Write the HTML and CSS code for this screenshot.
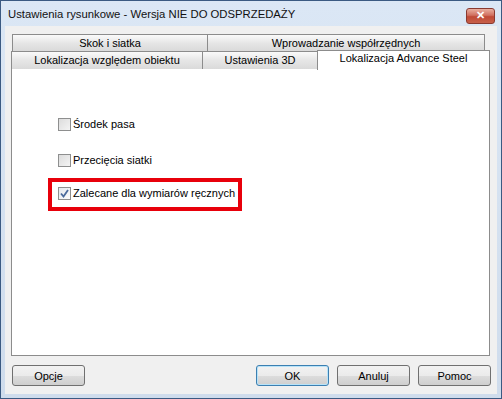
FILE: index.html
```html
<!DOCTYPE html>
<html lang="pl">
<head>
    <meta charset="UTF-8">
    <title>Ustawienia rysunkowe</title>
    <link rel="stylesheet" href="styles.css">
</head>
<body>
    <div class="window">
        <div class="titlebar">
            <span class="title">Ustawienia rysunkowe - Wersja NIE DO ODSPRZEDAŻY</span>
            <span class="close">&#x2715;</span>
        </div>
        <div class="client">
            <div class="tabs">
                <div class="tab-row back">
                    <div class="tab w195">Skok i siatka</div>
                    <div class="tab w277">Wprowadzanie współrzędnych</div>
                </div>
                <div class="tab-row front">
                    <div class="tab w191">Lokalizacja względem obiektu</div>
                    <div class="tab w115">Ustawienia 3D</div>
                    <div class="tab active">Lokalizacja Advance Steel</div>
                </div>
            </div>
            <div class="panel">
                <label class="check first"><span class="box"></span>Środek pasa</label>
                <label class="check second"><span class="box"></span>Przecięcia siatki</label>
                <div class="highlight">
                    <label class="check"><span class="box checked">
                        <svg width="11" height="11" viewBox="0 0 11 11"><path d="M2 5.5 L4.5 8.5 L9 2" fill="none" stroke="#4a6a9c" stroke-width="1.8"/></svg>
                    </span>Zalecane dla wymiarów ręcznych</label>
                </div>
            </div>
            <div class="buttons">
                <button>Opcje</button>
                <div class="spacer"></div>
                <button class="default">OK</button>
                <button>Anuluj</button>
                <button>Pomoc</button>
            </div>
        </div>
    </div>
</body>
</html>
```
FILE: styles.css
```css
body {
    margin: 0;
    font-family: "Liberation Sans", Arial, sans-serif;
    font-size: 11px;
    color: #000;
}

.window {
    width: 502px;
    height: 399px;
    box-sizing: border-box;
    border: 1px solid #3b5a82;
    background: linear-gradient(#dbe7f5, #cfdcec);
    display: flex;
    flex-direction: column;
    padding: 0 4px 4px 4px;
}

.titlebar {
    height: 25px;
    display: flex;
    align-items: center;
    justify-content: space-between;
    flex-shrink: 0;
}
.title {
    font-size: 11.3px;
    padding-left: 3px;
    margin-top: 1px;
    color: #111;
}
.close {
    width: 29px;
    height: 16px;
    margin-right: 2px;
    margin-top: 4px;
    border: 1px solid #8a3a30;
    border-radius: 3px;
    background: linear-gradient(#eab0a0, #d07060 45%, #c04a36 55%, #c8604a);
    color: #fff;
    font-size: 11px;
    font-weight: bold;
    display: flex;
    align-items: center;
    justify-content: center;
    box-sizing: border-box;
}

.client {
    flex: 1;
    background: #f0f0f0;
    padding: 8px 6px 0 6px;
    display: flex;
    flex-direction: column;
}

.tabs {
    display: flex;
    flex-direction: column;
}
.tab-row {
    display: flex;
}
.tab-row.back {
    padding-left: 1px;
    height: 17px;
}
.tab-row.front {
    height: 19px;
    margin-top: -1px;
    position: relative;
    z-index: 1;
}
.tab {
    box-sizing: border-box;
    border: 1px solid #8c8c8c;
    border-bottom: none;
    background: linear-gradient(#fafafa, #e6e6e6 50%, #dadada);
    text-align: center;
    line-height: 16px;
    margin-right: -1px;
    white-space: nowrap;
}
.tab-row.front .tab {
    margin-top: 1px;
    line-height: 17px;
}
.w195 { width: 196px; }
.w277 { width: 278px; }
.w191 { width: 192px; }
.w115 { width: 116px; }
.tab-row.front .tab.active {
    width: 173px;
    margin-top: 0;
    height: 20px;
    background: #fff;
    line-height: 15px;
}

.panel {
    height: 288px;
    box-sizing: border-box;
    border: 1px solid #8c8c8c;
    background: #fff;
    margin-top: -1px;
    width: 479px;
    padding: 48px 0 0 36px;
}

.check {
    display: flex;
    align-items: center;
    height: 14px;
    white-space: nowrap;
}
.check.first {
    padding-left: 10px;
}
.check.second {
    padding-left: 10px;
    margin-top: 22px;
}
.box {
    width: 13px;
    height: 13px;
    flex-shrink: 0;
    box-sizing: border-box;
    border: 1px solid #8e8f8f;
    background: linear-gradient(135deg, #dcdcdc, #f4f4f4);
    margin-right: 2px;
    display: flex;
    align-items: center;
    justify-content: center;
}
.box.checked {
    background: linear-gradient(135deg, #e4e8ee, #fbfbfb);
}

.highlight {
    width: 194px;
    height: 33px;
    box-sizing: border-box;
    border: 4px solid #e8000b;
    margin-top: 11px;
    padding: 4px 6px;
}

.buttons {
    display: flex;
    padding: 9px 0 0 1px;
    width: 479px;
}
.spacer {
    flex: 1;
}
button {
    width: 73px;
    height: 21px;
    margin-left: 8px;
    font-family: "Liberation Sans", Arial, sans-serif;
    font-size: 11px;
    color: #000;
    border: 1px solid #707070;
    border-radius: 3px;
    background: linear-gradient(#f2f2f2, #ebebeb 50%, #dddddd 51%, #cfcfcf);
    padding: 0;
}
button:first-child {
    margin-left: 0;
}
button.default {
    border-color: #3c7fb1;
    box-shadow: inset 0 0 0 1px #b7e3f9;
}
```
